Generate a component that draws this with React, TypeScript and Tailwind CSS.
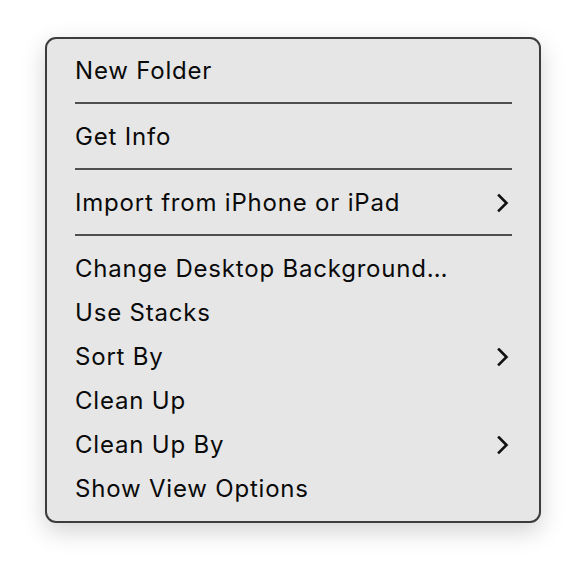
import React from 'react';

type Item = { label: string; sub?: boolean } | 'sep';

const items: Item[] = [
  { label: 'New Folder' },
  'sep',
  { label: 'Get Info' },
  'sep',
  { label: 'Import from iPhone or iPad', sub: true },
  'sep',
  { label: 'Change Desktop Background…' },
  { label: 'Use Stacks' },
  { label: 'Sort By', sub: true },
  { label: 'Clean Up' },
  { label: 'Clean Up By', sub: true },
  { label: 'Show View Options' },
];

const Chevron = () => (
  <svg width="12" height="20" viewBox="0 0 12 20" fill="none">
    <path d="M2 2.5 L9.5 10 L2 17.5" stroke="#111" strokeWidth="2.6" strokeLinecap="square" />
  </svg>
);

const App: React.FC = () => {
  return (
    <div className="w-[586px] h-[574px] bg-white pt-[37px] pl-[45px]" style={{ fontFamily: 'Inter, "Noto Sans", sans-serif' }}>
      <div className="w-[496px] rounded-[11px] border-2 border-[#3c3c3c] bg-[#e6e6e6] py-[10px] shadow-[0_8px_24px_rgba(0,0,0,0.18)]">
        {items.map((item, i) =>
          item === 'sep' ? (
            <div key={i} className="h-[22px] flex items-center pl-[28px] pr-[27px]">
              <div className="h-[2px] w-full bg-[#4f4f4f] mt-[-2px]" />
            </div>
          ) : (
            <div key={i} className="h-[44px] flex items-center justify-between pl-[28px] pr-[30px]">
              <span className="text-[24px] text-[#0a0a0a] tracking-[0.8px] leading-none">{item.label}</span>
              {item.sub && <Chevron />}
            </div>
          )
        )}
      </div>
    </div>
  );
};

export default App;
